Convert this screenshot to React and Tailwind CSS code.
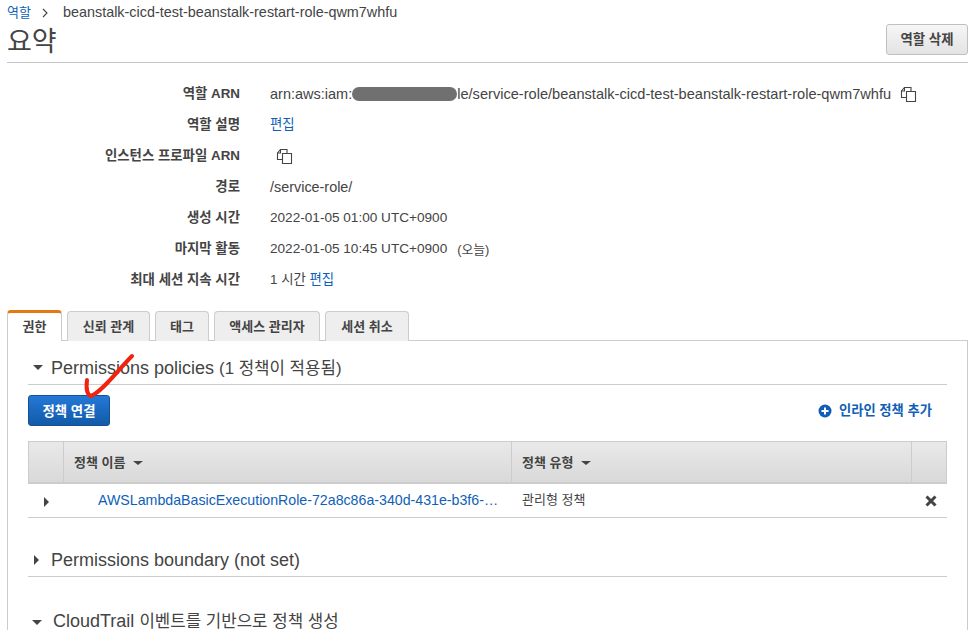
import { useState } from 'react';

const FONT = '"Liberation Sans", "Noto Sans CJK KR", sans-serif';

function CopyIcon() {
  return (
    <svg width="17" height="17" viewBox="0 0 17 17" fill="none" stroke="#444" strokeWidth="1.1">
      <path d="M6.5 11.5H1.5V5L4.5 1.5H11V5" />
      <path d="M4.5 1.5V5H1.5" />
      <path d="M6.5 5.5H15.5V15.5H6.5Z" fill="#fff" />
    </svg>
  );
}

function Caret({ open, small }) {
  if (open) {
    return small ? (
      <span className="inline-block w-0 h-0 border-x-[5px] border-x-transparent border-t-[4px] border-t-[#444]" />
    ) : (
      <span className="inline-block w-0 h-0 border-x-[5px] border-x-transparent border-t-[5px] border-t-[#444]" />
    );
  }
  return <span className="inline-block w-0 h-0 border-y-[5px] border-y-transparent border-l-[5px] border-l-[#444]" />;
}

function SummaryRow({ label, children }) {
  return (
    <div className="flex items-center h-[31px]">
      <div className="w-[233px] text-right font-bold text-[13.4px] text-[#444]">{label}</div>
      <div className="ml-[30px] flex items-center text-[13.6px] text-[#444] whitespace-nowrap">{children}</div>
    </div>
  );
}

const tabs = [
  { label: '권한', width: 'w-[55px]' },
  { label: '신뢰 관계', width: 'w-[83px]' },
  { label: '태그', width: 'w-[54px]' },
  { label: '액세스 관리자', width: 'w-[106px]' },
  { label: '세션 취소', width: 'w-[84px]' },
];

function Tabs() {
  const [active, setActive] = useState(0);
  return (
    <div className="flex gap-[5px] h-[31px] relative z-10">
      {tabs.map((t, i) => (
        <button
          key={t.label}
          onClick={() => setActive(i)}
          className={
            i === active
              ? `${t.width} h-[31px] bg-white border-x border-[#ccc] border-t-[3px] border-t-[#e47911] rounded-t-[4px] text-[13px] font-bold text-[#444]`
              : `${t.width} h-[30px] mt-[1px] bg-[#eee] border border-[#ccc] border-b-0 rounded-t-[4px] text-[13px] font-bold text-[#444]`
          }
        >
          {t.label}
        </button>
      ))}
    </div>
  );
}

export default function App() {
  return (
    <div className="relative h-[630px] w-[973px] overflow-hidden bg-white text-[#444]" style={{ fontFamily: FONT }}>
      <div className="pl-[7px] pr-[5px]">
        {/* 상단 경로 */}
        <div className="flex items-center h-[26px] text-[14.4px]">
          <a className="text-[13px] text-[#0f5fb8]">역할</a>
          <span className="ml-[10px] mr-[14px]">
            <svg width="8" height="10" viewBox="0 0 8 10" fill="none" stroke="#444" strokeWidth="1.1"><path d="M2 1l4 4-4 4" /></svg>
          </span>
          <span>beanstalk-cicd-test-beanstalk-restart-role-qwm7whfu</span>
        </div>

        <div className="flex items-start justify-between h-[36px] border-b border-[#c4c4c4] box-content">
          <h1 className="text-[27px] leading-[28px] mt-[2px] text-[#444]">요약</h1>
          <button className="w-[82px] h-[31px] -mt-[2px] pt-[2px] rounded-[3px] border border-[#c0c0c0] bg-gradient-to-b from-[#f6f6f6] to-[#e3e3e3] text-[13.4px] font-bold text-[#444]">
            역할 삭제
          </button>
        </div>

        {/* 요약 정보 */}
        <div className="mt-[16px]">
          <SummaryRow label="역할 ARN">
            <span className="text-[14.5px]">arn:aws:iam:</span>
            <span className="w-[105px] h-[14px] rounded-full bg-[#707070] blur-[0.5px]" />
            <span className="text-[14.6px]">le/service-role/beanstalk-cicd-test-beanstalk-restart-role-qwm7whfu</span>
            <span className="ml-[9px] flex"><CopyIcon /></span>
          </SummaryRow>
          <SummaryRow label="역할 설명"><a className="text-[13.4px] text-[#0f5fb8]">편집</a></SummaryRow>
          <SummaryRow label="인스턴스 프로파일 ARN"><span className="ml-[6px] flex"><CopyIcon /></span></SummaryRow>
          <SummaryRow label="경로"><span className="text-[14.4px]">/service-role/</span></SummaryRow>
          <SummaryRow label="생성 시간">2022-01-05 01:00 UTC+0900</SummaryRow>
          <SummaryRow label="마지막 활동">
            2022-01-05 10:45 UTC+0900<span className="ml-[10px] text-[12.8px]">(오늘)</span>
          </SummaryRow>
          <SummaryRow label="최대 세션 지속 시간">
            <span className="text-[13.4px]">1 시간&nbsp;</span><a className="text-[13.4px] text-[#0f5fb8]">편집</a>
          </SummaryRow>
        </div>

        {/* 탭 */}
        <div className="mt-[14px]">
          <Tabs />
          <div className="-mt-px border border-[#ccc] px-[20px] h-[400px]">
            <div className="flex items-center h-[43px] border-b border-[#ccc] box-content">
              <span className="w-[23px] pl-[5px] mt-[10px] flex items-center"><Caret open /></span>
              <h2 className="text-[18px] mt-[11px] text-[#444]">Permissions policies <span className="text-[16.8px]">(1 정책이 적용됨)</span></h2>
            </div>
            <div className="flex items-center justify-between mt-[10px] h-[31px]">
              <button className="w-[82px] h-[31px] pt-[3px] rounded-[3px] border border-[#15508f] bg-gradient-to-b from-[#2379d8] to-[#125aa8] text-[13.4px] font-bold text-white">
                정책 연결
              </button>
              <a className="flex items-center mr-[15px] pt-[1px] text-[13.3px] font-bold text-[#0f5fb8]">
                <svg width="14" height="14" viewBox="0 0 14 14" className="mr-[7px]">
                  <circle cx="7" cy="7" r="6.5" fill="#0f5fb8" />
                  <path d="M7 3.5v7M3.5 7h7" stroke="#fff" strokeWidth="2" />
                </svg>
                인라인 정책 추가
              </a>
            </div>

            {/* 정책 표 */}
            <div className="mt-[15px] text-[13px]">
              <div className="flex h-[43px] border-y border-x border-[#ccc] border-b-2 bg-gradient-to-b from-[#e9e9e9] to-[#d9d9d9] font-bold items-stretch">
                <div className="w-[35px] border-r border-[#ccc]" />
                <div className="w-[448px] border-r border-[#ccc] flex items-center pl-[10px] pt-[2px]">
                  정책 이름<span className="ml-[8px] flex"><Caret open small /></span>
                </div>
                <div className="flex-1 border-r border-[#ccc] flex items-center pl-[10px] pt-[2px]">
                  정책 유형<span className="ml-[8px] flex"><Caret open small /></span>
                </div>
                <div className="w-[34px]" />
              </div>
              <div className="flex items-center h-[33px] border-b border-[#ccc] box-content">
                <div className="w-[70px] pl-[16px] flex items-center mt-[2px]"><Caret /></div>
                <a className="w-[414px] text-[14.2px] text-[#0f5fb8] whitespace-nowrap">AWSLambdaBasicExecutionRole-72a8c86a-340d-431e-b3f6-…</a>
                <div className="flex-1 pl-[10px] -mt-[1px]">관리형 정책</div>
                <svg width="12" height="12" viewBox="0 0 12 12" className="mr-[10px]" stroke="#444" strokeWidth="3"><path d="M1.5 1.5l9 9M10.5 1.5l-9 9" /></svg>
              </div>
            </div>

            <div className="flex items-center h-[32px] mt-[26px] border-b border-[#ccc] box-content">
              <span className="w-[23px] pl-[6px] flex items-center"><Caret /></span>
              <h2 className="text-[18px] text-[#444]">Permissions boundary (not set)</h2>
            </div>

            <div className="flex items-center h-[32px] mt-[28px]">
              <span className="w-[25px] pl-[4px] mt-[2px] flex items-center"><Caret open /></span>
              <h2 className="text-[18px] text-[#444]">CloudTrail <span className="text-[16.8px]">이벤트를 기반으로 정책 생성</span></h2>
            </div>
          </div>
        </div>
      </div>

      {/* 빨간 체크 표시 */}
      <svg className="absolute left-[80px] top-[350px] pointer-events-none" width="60" height="52" viewBox="0 0 60 52" fill="none">
        <path d="M7 30C6 38 7 45 11 46C22 42 38 20 52 6" stroke="#f0230f" strokeWidth="4" strokeLinecap="round" />
      </svg>
    </div>
  );
}
